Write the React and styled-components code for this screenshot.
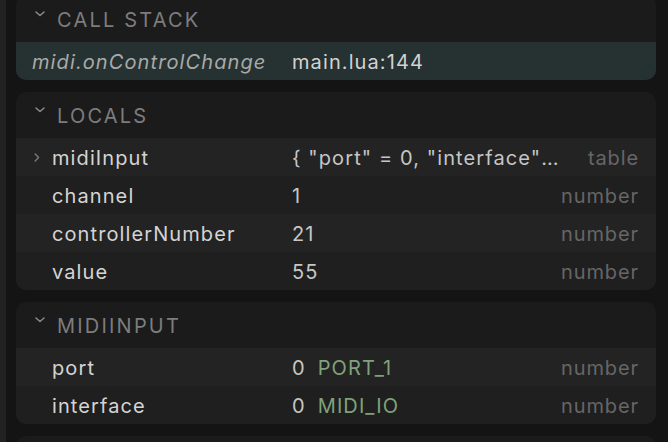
import styled, { createGlobalStyle } from 'styled-components';

const GlobalStyle = createGlobalStyle`
    html, body {
        margin: 0;
        padding: 0;
        background: #141414;
        overflow: hidden;
    }
    body {
        font-family: Inter, "Noto Sans", sans-serif;
        -webkit-font-smoothing: antialiased;
    }
`;

const locals = [
    { name: 'midiInput', value: '{ "port" = 0, "interface" = 0 }', type: 'table', expandable: true },
    { name: 'channel', value: '1', type: 'number' },
    { name: 'controllerNumber', value: '21', type: 'number' },
    { name: 'value', value: '55', type: 'number' },
];

const midiInput = [
    { name: 'port', value: '0', label: 'PORT_1', type: 'number' },
    { name: 'interface', value: '0', label: 'MIDI_IO', type: 'number' },
];

function DownChevron () {
    return (
        <HeaderChevron width="10" height="6" viewBox="0 0 10 6">
            <path d="M1 1 L5 4.5 L9 1" fill="none" stroke="#8a8a8a" strokeWidth="1.5" strokeLinecap="round" strokeLinejoin="round" />
        </HeaderChevron>
    );
}

function RightChevron () {
    return (
        <svg width="6" height="9" viewBox="0 0 6 9">
            <path d="M1.2 1 L4.6 4.5 L1.2 8" fill="none" stroke="#7a7a7a" strokeWidth="1.4" strokeLinecap="round" strokeLinejoin="round" />
        </svg>
    );
}

function Section ({ title, children }) {
    return (
        <Panel>
            <PanelHeader>
                <DownChevron />
                <HeaderTitle>{title}</HeaderTitle>
            </PanelHeader>
            {children}
        </Panel>
    );
}

function VariableRow ({ variable, striped }) {
    return (
        <Row $striped={striped}>
            <ExpandCell>{variable.expandable ? <RightChevron /> : null}</ExpandCell>
            <NameCell>{variable.name}</NameCell>
            <ValueCell>
                {variable.value}
                {variable.label ? <EnumLabel>{variable.label}</EnumLabel> : null}
            </ValueCell>
            <TypeCell>{variable.type}</TypeCell>
        </Row>
    );
}

export default function App () {
    return (
        <>
            <GlobalStyle />
            <Page>
                <EdgeStrip />
                <Content>
                    <Section title="Call Stack">
                        <StackFrame>
                            <FrameName>midi.onControlChange</FrameName>
                            <FrameLocation>main.lua:144</FrameLocation>
                        </StackFrame>
                    </Section>
                    <Section title="Locals">
                        {locals.map((variable, index) => (
                            <VariableRow key={variable.name} variable={variable} striped={index % 2 === 0} />
                        ))}
                    </Section>
                    <Section title="midiInput">
                        {midiInput.map((variable, index) => (
                            <VariableRow key={variable.name} variable={variable} striped={index % 2 === 0} />
                        ))}
                    </Section>
                    <Section title="" />
                </Content>
            </Page>
        </>
    );
}

const Page = styled.div`
    width: 668px;
    height: 442px;
    display: flex;
    overflow: hidden;
    background: #141414;
`;

const EdgeStrip = styled.div`
    width: 6px;
    flex-shrink: 0;
    background: #222222;
`;

const Content = styled.div`
    flex: 1;
    margin-top: -4px;
    padding: 0 12px 0 10px;
    display: flex;
    flex-direction: column;
    gap: 12px;
`;

const Panel = styled.div`
    background: #1b1b1b;
    border-radius: 10px;
    overflow: hidden;
    flex-shrink: 0;
`;

const PanelHeader = styled.div`
    height: 46px;
    display: flex;
    align-items: center;
    padding-left: 19px;
    padding-top: 2px;
    box-sizing: border-box;
`;

const HeaderChevron = styled.svg`
    align-self: flex-start;
    margin-top: 13px;
    margin-right: 12px;
`;

const HeaderTitle = styled.span`
    font-size: 20px;
    letter-spacing: 2.2px;
    text-transform: uppercase;
    color: #7d7d7d;
`;

const StackFrame = styled.div`
    height: 38px;
    display: grid;
    grid-template-columns: 260px 1fr;
    align-items: center;
    padding-left: 16px;
    padding-top: 1px;
    box-sizing: border-box;
    background: #263131;
    font-size: 20px;
    letter-spacing: 1.1px;
`;

const FrameName = styled.span`
    font-style: italic;
    color: #a9a9a9;
`;

const FrameLocation = styled.span`
    color: #d2d2d2;
`;

const Row = styled.div`
    height: 38px;
    display: grid;
    grid-template-columns: 36px 240px minmax(0, 1fr) 80px;
    align-items: center;
    padding-right: 17px;
    padding-top: 1px;
    box-sizing: border-box;
    background: ${props => props.$striped ? '#232323' : '#1f1f1f'};
    font-size: 20px;
    letter-spacing: 1.1px;
`;

const ExpandCell = styled.div`
    display: flex;
    justify-content: center;
    padding-left: 6px;
`;

const NameCell = styled.span`
    color: #d4d4d4;
    white-space: nowrap;
`;

const ValueCell = styled.span`
    color: #c6c6c6;
    white-space: nowrap;
    overflow: hidden;
    text-overflow: ellipsis;
`;

const EnumLabel = styled.span`
    margin-left: 12px;
    color: #7fa27a;
`;

const TypeCell = styled.span`
    color: #666666;
    text-align: right;
    white-space: nowrap;
    letter-spacing: 0.9px;
`;
